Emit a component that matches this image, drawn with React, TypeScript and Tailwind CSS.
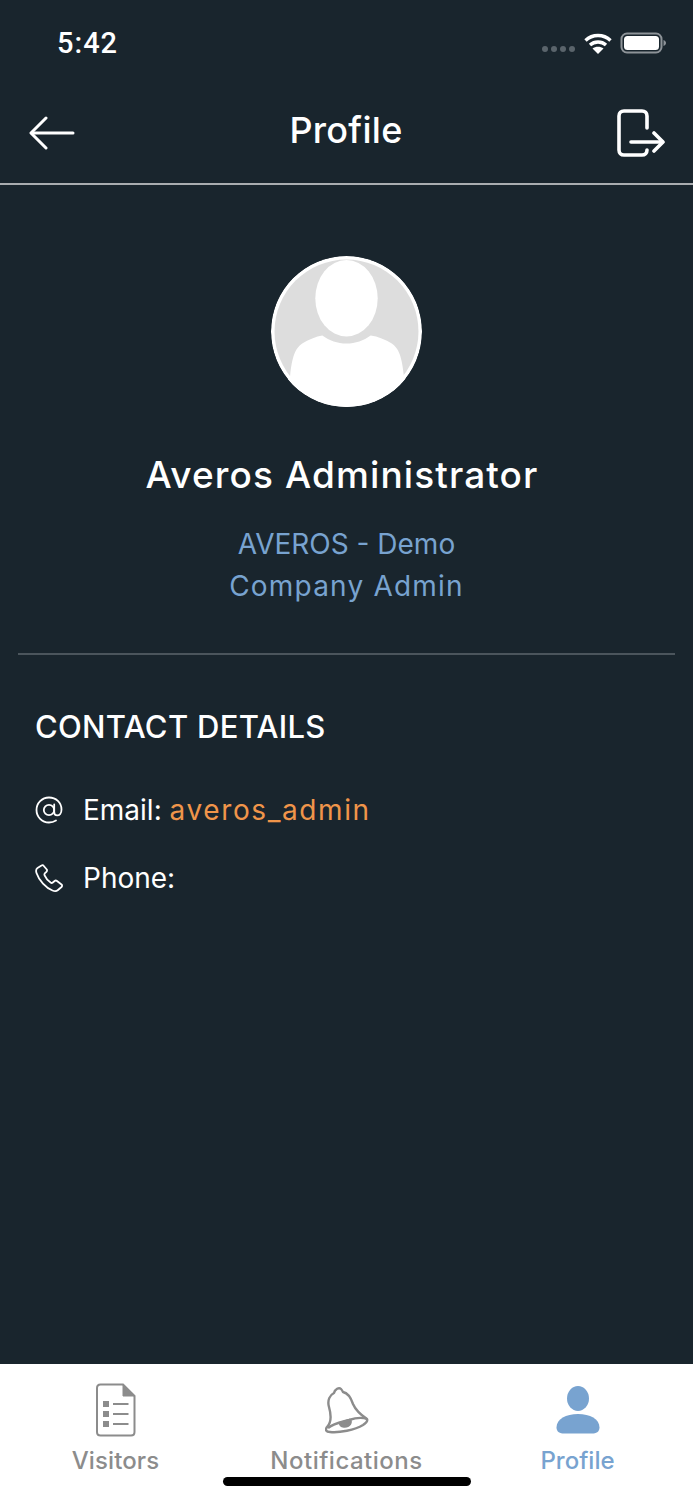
const StatusIcons = () => (
  <svg width="124" height="24" viewBox="0 0 124 24" fill="none">
    <g fill="#5a646b">
      <circle cx="3" cy="17" r="3" />
      <circle cx="12" cy="17" r="3" />
      <circle cx="21" cy="17" r="3" />
      <circle cx="30" cy="17" r="3" />
    </g>
    <g stroke="#fff" strokeWidth="3.4" strokeLinecap="butt">
      <path d="M43.5 8.5C50.5 1.8 61.5 1.8 68.5 8.5" />
      <path d="M48 13c4.500-4 11.500-4 16 0" />
    </g>
    <path d="M50.500 16.500c3-2.500 8-2.500 11 0L56 22z" fill="#fff" />
    <rect x="79.500" y="1.500" width="40" height="19" rx="5.500" stroke="#8d9398" strokeWidth="2" />
    <rect x="82" y="4" width="35" height="14" rx="3.500" fill="#fff" />
    <path d="M121.500 8v6c1.500-.5 2.500-1.700 2.500-3s-1-2.500-2.500-3z" fill="#8d9398" />
  </svg>
);

const BackIcon = () => (
  <svg width="46" height="34" viewBox="0 0 46 34" fill="none" stroke="#fff" strokeWidth="3" strokeLinecap="round" strokeLinejoin="round">
    <path d="M44 17H3" />
    <path d="M17 2 2 17l15 15" />
  </svg>
);

const LogoutIcon = () => (
  <svg width="48" height="48" viewBox="0 0 48 48" fill="none" stroke="#fff" strokeWidth="3.600" strokeLinecap="round" strokeLinejoin="round">
    <path d="M30 19V7c0-3-2-5-5-5H7C4 2 2 4 2 7v34c0 3 2 5 5 5h18c3 0 5-2 5-5" />
    <path d="M14 33h31" />
    <path d="m37 24 9 9-9 9" />
  </svg>
);

const Avatar = () => (
  <svg width="151" height="151" viewBox="0 0 150 150" className="rounded-full">
    <circle cx="75" cy="75" r="75" fill="#ffffff" />
    <circle cx="75" cy="75" r="71.500" fill="#dddddd" />
    <ellipse cx="75" cy="42" rx="31" ry="38" fill="#ffffff" />
    <path d="M19 119C21 100 24 92 31 87C37 83 45 80 51 79C58 84 66 87 75 87C84 87 92 84 99 79C106 80 114 83 120 87C127 92 130 100 132 119L150 150H0Z" fill="#ffffff" />
  </svg>
);

const AtIcon = () => (
  <svg width="28" height="28" viewBox="0 0 28 28" fill="none" stroke="#fff" strokeWidth="1.800" strokeLinecap="round">
    <circle cx="14" cy="14" r="5.200" />
    <path d="M19.200 8.500V16c0 2 1.200 3.400 3 3.400 2.300 0 4.300-2.200 4.300-5.900C26.500 6.500 21 1.500 14 1.500 7 1.500 1.500 7 1.500 14S7 26.500 14 26.500c2.700 0 5-.7 7-2" />
  </svg>
);

const PhoneIcon = () => (
  <svg width="28" height="28" viewBox="0 0 28 28" fill="none" stroke="#fff" strokeWidth="1.800" strokeLinejoin="round">
    <path d="M6.500 1.500 2.500 4C1 5 .8 6.800 1.500 9c2.500 7.500 9.500 15 16 17.500 2 .8 4 .8 5.500-.5l3.500-3c.8-.8.8-1.800 0-2.500l-4.500-3.500c-.8-.6-1.700-.6-2.400 0l-1.800 1.500c-.7.6-1.500.6-2.200.1-2.500-1.800-4.800-4.500-6-7.300-.4-.8-.2-1.500.4-2.100l1.400-1.400c.7-.7.8-1.500.4-2.300L8.800 2c-.5-.9-1.400-1.100-2.300-.5Z" />
  </svg>
);

const VisitorsIcon = () => (
  <svg width="40" height="54" viewBox="0 0 40 54" fill="none">
    <path d="M4.500 1.500H27L38.500 13v36c0 2-1.500 3.500-3.500 3.500H4.500C2.500 52.500 1 51 1 49V5c0-2 1.500-3.500 3.500-3.500Z" stroke="#8c8c8c" strokeWidth="2" />
    <path d="M27 1.500 38.500 13H27Z" fill="#8c8c8c" stroke="#8c8c8c" strokeWidth="1" strokeLinejoin="round" />
    <g fill="#8c8c8c">
      <rect x="7" y="18" width="6" height="6" />
      <rect x="7" y="28" width="6" height="6" />
      <rect x="7" y="38" width="6" height="6" />
    </g>
    <g stroke="#8c8c8c" strokeWidth="2">
      <path d="M17 21h15.500" />
      <path d="M17 31h15.500" />
      <path d="M17 41h15.500" />
    </g>
  </svg>
);

const BellIcon = () => (
  <svg width="44" height="48" viewBox="0 0 44 48" fill="none" stroke="#8c8c8c" strokeWidth="2.400" strokeLinejoin="round">
    <path d="M9 7C10 3 14 1 16 3C17 4 17.500 5 18 6C23 7 26 12 28 18C31 25 36 29 42 33C43 35 41 37 38 39C30 44 14 47 5 46C1 46 0 44 2 41C7 36 6 28 4 21C2 14 5 9 9 7Z" />
    <path d="M3 42C9 37 17 36 24 34C30 32 37 31 42 33" />
    <path d="M15 37C15 41 22 42 25 38C26 36 26 35 25 34Z" fill="#8c8c8c" />
  </svg>
);

const PersonIcon = () => (
  <svg width="44" height="48" viewBox="0 0 44 48" fill="#78a3d0">
    <ellipse cx="22" cy="12.500" rx="11" ry="12.500" />
    <path d="M22 28C10 28 .5 33 .5 41.500.5 46 4 47.500 8 47.500h28c4 0 7.500-1.500 7.500-6C43.500 33 34 28 22 28Z" />
  </svg>
);

const tabs = [
  { label: "Visitors", icon: <VisitorsIcon />, color: "text-[#8c8c8c] tracking-[0.1px]" },
  { label: "Notifications", icon: <BellIcon />, color: "text-[#8c8c8c] tracking-[0.5px]" },
  { label: "Profile", icon: <PersonIcon />, color: "text-[#78a3d0]" },
];

const App = () => {
  return (
    <div className="relative flex h-[1500px] w-[693px] flex-col overflow-hidden bg-[#19252d] font-['Inter',sans-serif] text-white">
      <div className="flex h-[87px] items-center justify-between pl-[57px] pr-[27px]">
        <span className="font-['Roboto',sans-serif] text-[29px] font-medium tracking-[1px]">5:42</span>
        <StatusIcons />
      </div>

      <header className="flex h-[98px] items-center justify-between border-b-2 border-[#a9adb0] pl-[29px] pr-[28px] pb-[5px]">
        <BackIcon />
        <h1 className="mb-[5px] text-[36px] font-medium tracking-[0.3px]">Profile</h1>
        <LogoutIcon />
      </header>

      <main className="flex flex-1 flex-col">
        <div className="mt-[71px] flex flex-col items-center">
          <Avatar />
          <h2 className="mt-[44px] pr-[9px] text-[37px] leading-[48px] font-medium tracking-[1.100px]">Averos Administrator</h2>
          <div className="mt-[24px] flex flex-col items-center text-[28px] leading-[42px] text-[#78a3d0]">
            <span>AVEROS - Demo</span>
            <span className="tracking-[1.200px]">Company Admin</span>
          </div>
        </div>

        <div className="mx-[18px] mt-[46px] h-[2px] bg-[#4b555c]" />

        <section className="px-[35px]">
          <h3 className="mt-[52px] text-[31px] leading-[40px] font-medium tracking-[0.3px]">CONTACT DETAILS</h3>
          <div className="mt-[43px] flex h-[40px] items-center gap-[20px] text-[28px]">
            <AtIcon />
            <span>
              Email: <span className="tracking-[1.600px] text-[#f0954a]">averos_admin</span>
            </span>
          </div>
          <div className="mt-[28px] flex h-[40px] items-center gap-[20px] text-[28px]">
            <PhoneIcon />
            <span>Phone:</span>
          </div>
        </section>
      </main>

      <nav className="grid h-[136px] grid-cols-3 bg-white pt-[19px]">
        {tabs.map((tab) => (
          <div key={tab.label} className="flex flex-col items-center">
            <div className="flex h-[54px] items-center">{tab.icon}</div>
            <span className={`mt-[6px] text-[24px] leading-[36px] font-medium ${tab.color}`}>{tab.label}</span>
          </div>
        ))}
      </nav>

      <div className="absolute bottom-[14px] left-[223px] h-[9px] w-[248px] rounded-full bg-black" />
    </div>
  );
};

export default App;
